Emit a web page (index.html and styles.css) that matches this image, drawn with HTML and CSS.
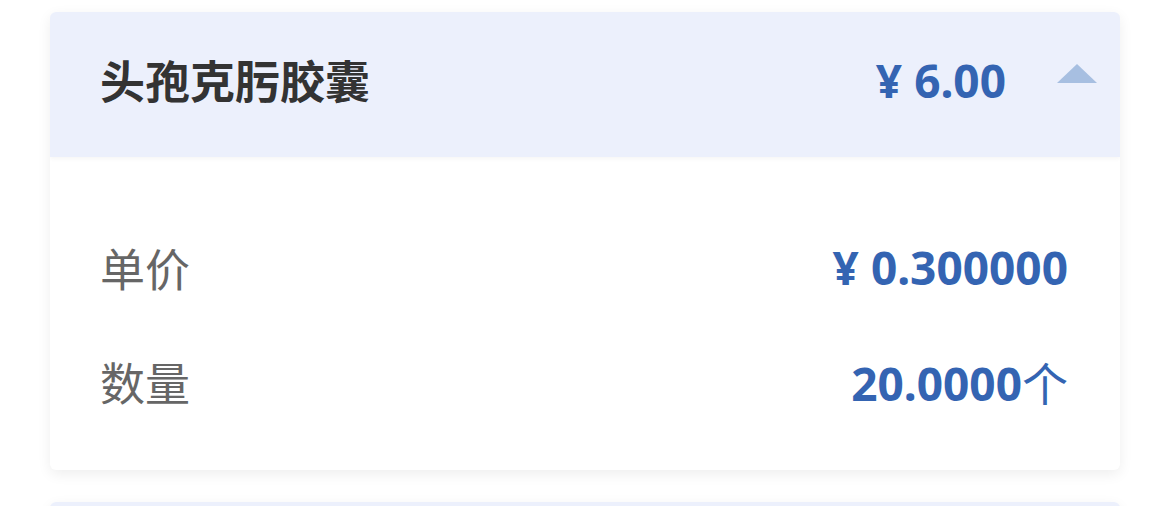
FILE: index.html
```html
<!DOCTYPE html>
<html lang="zh-CN">
<head>
    <meta charset="UTF-8">
    <meta name="viewport" content="width=device-width, initial-scale=1.0">
    <title>药品明细</title>
    <link rel="stylesheet" href="styles.css">
</head>
<body>
    <div class="drug-list">
        <div class="drug-card">
            <div class="drug-header">
                <span class="drug-name">头孢克肟胶囊</span>
                <span class="drug-total">¥ 6.00</span>
                <span class="toggle-arrow"></span>
            </div>
            <div class="drug-detail">
                <div class="detail-row">
                    <span class="detail-label">单价</span>
                    <span class="detail-value">¥ 0.300000</span>
                </div>
                <div class="detail-row">
                    <span class="detail-label">数量</span>
                    <span class="detail-value">20.0000<span class="unit">个</span></span>
                </div>
            </div>
        </div>

        <div class="drug-card">
            <div class="drug-header">
                <span class="drug-name"></span>
            </div>
        </div>
    </div>
</body>
</html>
```

FILE: styles.css
```css
body {
    margin: 0;
    padding: 0;
    background-color: #fff;
    font-family: "Noto Sans", "Noto Sans CJK SC", sans-serif;
}

.drug-list {
    padding: 12px 50px 0;
    display: flex;
    flex-direction: column;
    gap: 32px;
}

.drug-card {
    background-color: #fff;
    border-radius: 6px;
    box-shadow: 0 4px 14px rgba(0, 0, 0, 0.07);
    overflow: hidden;
}

.drug-header {
    height: 145px;
    box-sizing: border-box;
    display: flex;
    align-items: center;
    padding: 0 23px 10px 50px;
    background-color: #ecf0fc;
    box-shadow: 0 2px 4px rgba(0, 0, 0, 0.04);
}

.drug-name {
    flex: 1;
    font-size: 45px;
    font-weight: bold;
    color: #333;
}

.drug-total {
    font-size: 46px;
    font-weight: bold;
    color: #3464b2;
    margin-right: 51px;
}

.toggle-arrow {
    width: 0;
    height: 0;
    border-left: 20px solid transparent;
    border-right: 20px solid transparent;
    border-bottom: 19px solid #a7bfe1;
    margin-bottom: 12px;
}

.drug-detail {
    padding: 53px 52px 32px 50px;
}

.detail-row {
    height: 114px;
    display: flex;
    align-items: center;
    justify-content: space-between;
}

.detail-label {
    font-size: 45px;
    color: #666;
}

.detail-value {
    font-size: 46px;
    font-weight: bold;
    color: #3464b2;
}

.unit {
    font-weight: normal;
}
```
